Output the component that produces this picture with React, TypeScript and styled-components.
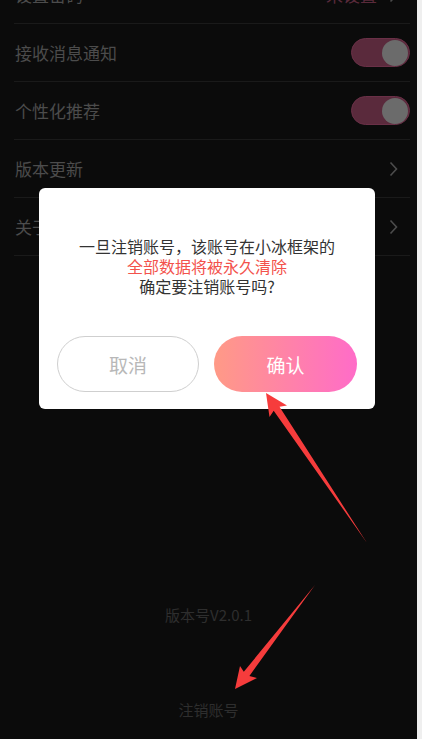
import React from "react";
import styled, { createGlobalStyle } from "styled-components";

const GlobalStyle = createGlobalStyle`
  body {
    margin: 0;
    background-color: #0b0b0b;
    font-family: "Noto Sans CJK SC", "Noto Sans", sans-serif;
  }
`;

const Screen = styled.div`
  position: relative;
  display: flex;
  width: 422px;
  height: 739px;
  overflow: hidden;
`;

const Page = styled.div`
  display: flex;
  flex-direction: column;
  width: 417px;
  background-color: #0b0b0b;
`;

const Edge = styled.div`
  flex: 1;
  background-color: #efefef;
`;

const List = styled.div`
  display: flex;
  flex-direction: column;
  margin: -34px 7px 0 14px;
`;

const Row = styled.div`
  display: flex;
  align-items: center;
  justify-content: space-between;
  height: 58px;
  padding-left: 1px;
  border-bottom: 1px solid #1a1a1a;
  box-sizing: border-box;
`;

const Label = styled.span`
  font-size: 17px;
  color: #4c4c4c;
`;

const Side = styled.div`
  display: flex;
  align-items: center;
  gap: 12px;
  padding-right: 12px;
`;

const Hint = styled.span`
  font-size: 17px;
  color: #5a2a3b;
`;

const Toggle = styled.div`
  display: flex;
  justify-content: flex-end;
  align-items: center;
  width: 59px;
  height: 29px;
  padding: 1px;
  box-sizing: border-box;
  border-radius: 15px;
  background-color: #5a2a3c;
  border: 1px solid #6a3047;
`;

const Knob = styled.div`
  width: 26px;
  height: 26px;
  border-radius: 50%;
  background-color: #6b6b6b;
`;

const Footer = styled.div`
  display: flex;
  flex-direction: column;
  align-items: center;
  margin-top: 349px;
`;

const FooterText = styled.span<{ $gap?: number }>`
  font-size: 15px;
  line-height: 20px;
  color: #2e2e2e;
  margin-top: ${(p) => p.$gap ?? 0}px;
`;

const Dialog = styled.div`
  position: absolute;
  top: 188px;
  left: 39px;
  width: 336px;
  height: 221px;
  box-sizing: border-box;
  padding: 48px 18px 17px;
  display: flex;
  flex-direction: column;
  background-color: #ffffff;
  border-radius: 6px;
`;

const Message = styled.p`
  margin: 0;
  text-align: center;
  font-size: 16px;
  line-height: 20px;
  color: #333333;
`;

const Line = styled.span<{ $warn?: boolean }>`
  display: block;
  color: ${(p) => (p.$warn ? "#f3524c" : "#333333")};
`;

const Buttons = styled.div`
  display: grid;
  grid-template-columns: 142px 143px;
  gap: 15px;
  margin-top: 40px;
`;

const Button = styled.button<{ $primary?: boolean }>`
  height: 56px;
  border-radius: 28px;
  font-family: "Noto Sans CJK SC", sans-serif;
  font-size: 19px;
  cursor: pointer;
  border: ${(p) => (p.$primary ? "none" : "1px solid #cfcfcf")};
  color: ${(p) => (p.$primary ? "#ffffff" : "#b8b8b8")};
  background: ${(p) =>
    p.$primary ? "linear-gradient(90deg, #ff9a86 0%, #ff6cc8 100%)" : "#ffffff"};
`;

const Marks = styled.svg`
  position: absolute;
  top: 0;
  left: 0;
  pointer-events: none;
`;

function Chevron() {
  return (
    <svg width="9" height="16" viewBox="0 0 9 16">
      <path d="M1.5 1.5 L7.5 8 L1.5 14.5" fill="none" stroke="#4c4c4c" strokeWidth="1.6" />
    </svg>
  );
}

function Switch() {
  return (
    <Toggle>
      <Knob />
    </Toggle>
  );
}

export default function App() {
  return (
    <>
      <GlobalStyle />
      <Screen>
        <Page>
          <List>
            <Row>
              <Label>设置密码</Label>
              <Side>
                <Hint>未设置</Hint>
                <Chevron />
              </Side>
            </Row>
            <Row>
              <Label>接收消息通知</Label>
              <Switch />
            </Row>
            <Row>
              <Label>个性化推荐</Label>
              <Switch />
            </Row>
            <Row>
              <Label>版本更新</Label>
              <Side>
                <Chevron />
              </Side>
            </Row>
            <Row>
              <Label>关于我们</Label>
              <Side>
                <Chevron />
              </Side>
            </Row>
          </List>
          <Footer>
            <FooterText>版本号V2.0.1</FooterText>
            <FooterText $gap={75}>注销账号</FooterText>
          </Footer>
        </Page>
        <Edge />

        <Dialog>
          <Message>
            <Line>一旦注销账号，该账号在小冰框架的</Line>
            <Line $warn>全部数据将被永久清除</Line>
            <Line>确定要注销账号吗?</Line>
          </Message>
          <Buttons>
            <Button>取消</Button>
            <Button $primary>确认</Button>
          </Buttons>
        </Dialog>

        <Marks width="422" height="739" viewBox="0 0 422 739">
          <polygon
            points="266,393 287,405.5 279.5,406.8 367,543 273.7,410.8 269.5,417"
            fill="#f63c3c"
          />
          <polygon
            points="235,689 257,678 249.4,676 315,585 243.8,671.8 240,666"
            fill="#f63c3c"
          />
        </Marks>
      </Screen>
    </>
  );
}
